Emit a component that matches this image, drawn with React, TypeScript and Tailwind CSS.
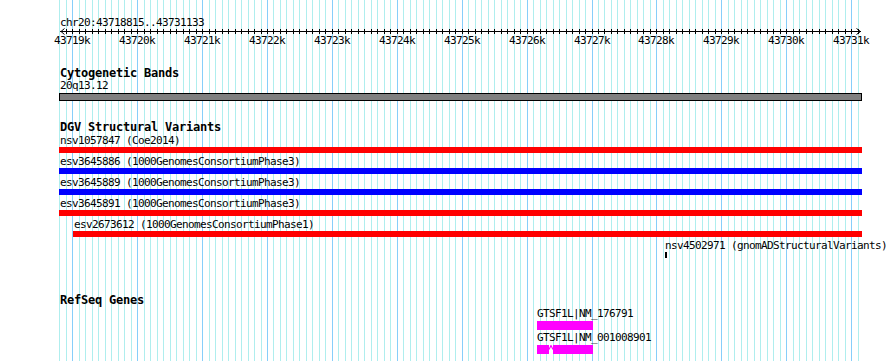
const VIEW_START = 43718815;
const VIEW_END = 43731133;

// pixel column for a base position (track spans roughly x 60..860)
const px = (bp: number) => Math.floor(72.8 + (bp - 43719000) * 0.0649);

const TRACK_LEFT = 59;

const majors: number[] = [];
for (let k = 43719; k <= 43731; k++) majors.push(k);

const minors: number[] = [];
for (let bp = 43718800; bp <= VIEW_END; bp += 100) minors.push(bp);

function Grid() {
  return (
    <svg className="absolute inset-0" width={890} height={361}>
      {minors.map((bp) => (
        <rect key={bp} x={px(bp)} y={0} width={1} height={361} fill={bp % 1000 === 0 ? "#87cefa" : "#afeeee"} />
      ))}
    </svg>
  );
}

function Ruler() {
  const left = px(VIEW_START);
  const right = px(VIEW_END);
  return (
    <div className="relative h-[20px] w-[803px]">
      <svg width={803} height={9} className="block" shapeRendering="crispEdges">
        <g transform={`translate(${-TRACK_LEFT} 0)`}>
          <rect x={left} y={4} width={right - left + 1} height={1} fill="#000" />
          {minors
            .filter((bp) => bp > VIEW_START)
            .map((bp) => (
              <rect key={bp} x={px(bp)} y={2} width={1} height={5} fill="#000" />
            ))}
          <path d={`M${left + 4.5} 1.5 L${left + 1} 4.5 L${left + 4.5} 7.5`} stroke="#000" fill="none" shapeRendering="auto" />
          <path d={`M${right - 3.5} 1.5 L${right + 0.5} 4.5 L${right - 3.5} 7.5`} stroke="#000" fill="none" shapeRendering="auto" />
        </g>
      </svg>
      {majors.map((k) => (
        <span
          key={k}
          className="absolute top-[7px] h-[13px] leading-[13px] whitespace-nowrap"
          style={{ left: px(k * 1000) - TRACK_LEFT - 18 }}
        >
          {k}k
        </span>
      ))}
    </div>
  );
}

function TrackTitle({ children, className = "" }: { children: string; className?: string }) {
  return (
    <div className={`h-[12px] leading-[12px] text-[12px] font-bold tracking-[-0.22px] whitespace-nowrap ${className}`}>
      {children}
    </div>
  );
}

type Variant = { label: string; color: string; offset: string };

const variants: Variant[] = [
  { label: "nsv1057847 (Coe2014)", color: "bg-[#ff0000]", offset: "ml-0" },
  { label: "esv3645886 (1000GenomesConsortiumPhase3)", color: "bg-[#0000ff]", offset: "ml-0" },
  { label: "esv3645889 (1000GenomesConsortiumPhase3)", color: "bg-[#0000ff]", offset: "ml-0" },
  { label: "esv3645891 (1000GenomesConsortiumPhase3)", color: "bg-[#ff0000]", offset: "ml-0" },
  { label: "esv2673612 (1000GenomesConsortiumPhase1)", color: "bg-[#ff0000]", offset: "ml-[14px]" },
];

export default function App() {
  return (
    <div className="relative w-[890px] h-[361px] overflow-hidden bg-white text-black font-['DejaVu_Sans_Mono','Liberation_Mono',monospace] text-[11px] tracking-[-0.62px]">
      <Grid />
      <div className="relative pl-[59px] pt-[16px] w-[862px]">
        <div className="h-[13px] leading-[13px] pl-px">chr20:43718815..43731133</div>
        <div className="-mt-[2px]">
          <Ruler />
        </div>

        <TrackTitle className="mt-[20px] pl-px">Cytogenetic Bands</TrackTitle>
        <div className="h-[13px] leading-[13px] pl-px">20q13.12</div>
        <div className="mt-px h-[8px] w-[803px] border border-black bg-[#808080]" />

        <TrackTitle className="mt-[20px] pl-px">DGV Structural Variants</TrackTitle>
        <div className="mt-px flex flex-col gap-[2px]">
          {variants.map((v) => (
            <div key={v.label} className={v.offset}>
              <div className="h-[13px] leading-[13px] pl-px whitespace-nowrap">{v.label}</div>
              <div className={`h-[6px] ${v.color}`} />
            </div>
          ))}
          <div className="ml-[606px]">
            <div className="h-[13px] leading-[13px] whitespace-nowrap">nsv4502971 (gnomADStructuralVariants)</div>
            <div className="h-[6px] w-[2px] bg-black" />
          </div>
        </div>

        <TrackTitle className="mt-[36px] pl-px">RefSeq Genes</TrackTitle>
        <div className="ml-[478px] mt-[2px] flex flex-col gap-[2px]">
          <div>
            <div className="relative z-10 h-[13px] leading-[11px] whitespace-nowrap">GTSF1L|NM_176791</div>
            <div className="h-[9px] w-[56px] bg-[#ff00ff]" />
          </div>
          <div>
            <div className="relative z-10 h-[13px] leading-[11px] whitespace-nowrap">GTSF1L|NM_001008901</div>
            <div className="flex h-[9px] w-[56px]">
              <div className="w-[12px] bg-[#ff00ff]" />
              <svg width={4} height={9} className="block">
                <path d="M0 4.5 L2 0.5 L4 4.5" stroke="#ff00ff" strokeWidth={1.2} fill="none" />
              </svg>
              <div className="flex-1 bg-[#ff00ff]" />
            </div>
          </div>
        </div>
      </div>
    </div>
  );
}
